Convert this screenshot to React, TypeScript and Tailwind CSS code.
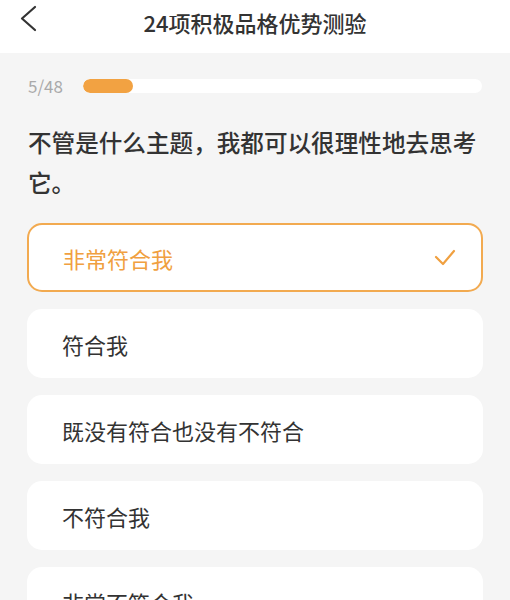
import React from "react";

const options = ["非常符合我", "符合我", "既没有符合也没有不符合", "不符合我", "非常不符合我"];

export default function App() {
  const selected = 0;
  return (
    <div
      className="w-[510px] h-[600px] overflow-hidden bg-[#f5f5f5] text-[#333]"
      style={{ fontFamily: '"Noto Sans CJK SC", "Noto Sans", sans-serif' }}
    >
      <div className="relative h-[53px] bg-white flex items-center justify-center">
        <svg
          className="absolute left-[18px] top-[4px]"
          width="22"
          height="30"
          viewBox="0 0 22 30"
          fill="none"
        >
          <polyline
            points="17,3 4,14.5 17,26"
            stroke="#333"
            strokeWidth="2.2"
            strokeLinecap="round"
            strokeLinejoin="round"
          />
        </svg>
        <div className="text-[22px] leading-[30px] font-medium text-[#333] -mt-[10px]">24项积极品格优势测验</div>
      </div>

      <div className="mt-[26px] px-[28px] flex items-center h-[14px]">
        <div className="w-[36px] text-[17px] leading-[14px] text-[#aaaaaa]">5/48</div>
        <div className="ml-[19px] flex-1 h-[14px] rounded-full bg-white overflow-hidden">
          <div className="h-full w-[50px] rounded-full bg-[#f2a242]" />
        </div>
      </div>

      <div className="mt-[29px] pl-[28px] pr-[26px] text-[23.6px] leading-[40px] font-medium text-[#333]">
        不管是什么主题，我都可以很理性地去思考它。
      </div>

      <div className="mt-[21px] px-[27px] flex flex-col gap-[17px]">
        {options.map((o, i) => (
          <div
            key={o}
            className={
              i === selected
                ? "h-[69px] shrink-0 rounded-[15px] bg-white border-2 border-[#f2aa50] pl-[34px] pr-[24px] flex items-center justify-between"
                : "h-[69px] shrink-0 rounded-[15px] bg-white pl-[35px] pr-[24px] flex items-center justify-between"
            }
          >
            <span
              className={
                i === selected
                  ? "text-[22px] leading-[30px] text-[#f0a040]"
                  : "text-[22px] leading-[30px] text-[#333]"
              }
            >
              {o}
            </span>
            {i === selected && (
              <svg width="24" height="20" viewBox="0 0 24 20" fill="none">
                <polyline
                  points="3,9 10,16 21,3"
                  stroke="#f0a040"
                  strokeWidth="2.2"
                  strokeLinecap="round"
                  strokeLinejoin="round"
                />
              </svg>
            )}
          </div>
        ))}
      </div>
    </div>
  );
}
